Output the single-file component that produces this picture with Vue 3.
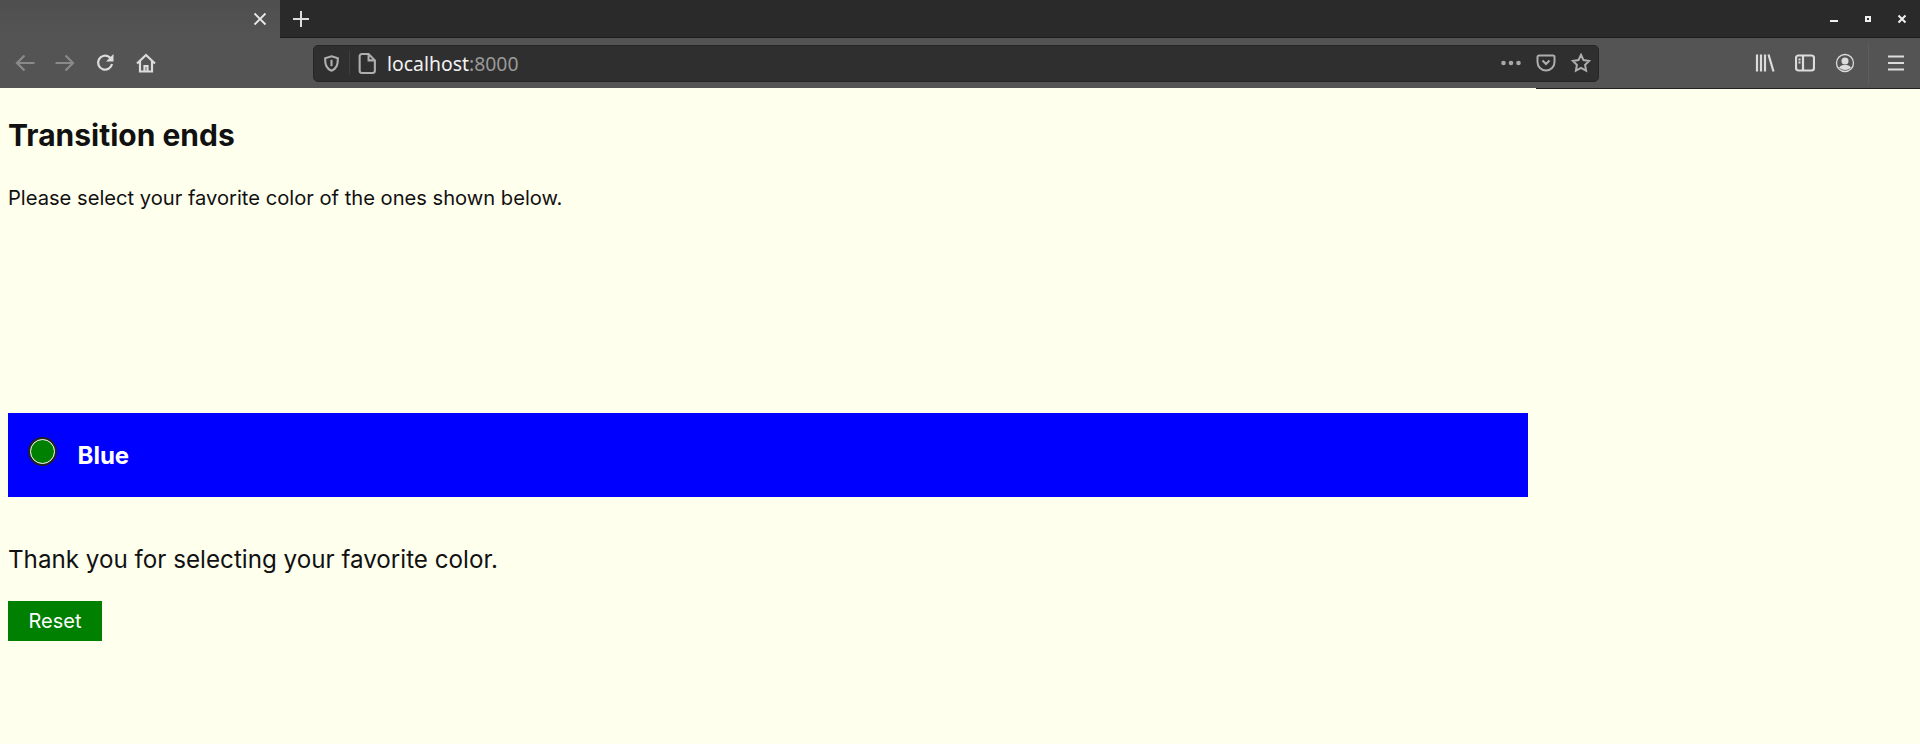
<script setup>
const pageTitle = 'Transition ends';
const colorName = 'Blue';
</script>

<template>
  <div class="window">
    <div class="tabbar">
      <div class="tab">
        <svg class="tab-close" viewBox="0 0 14 14"><path d="M1.5 1.5l11 11M12.5 1.5l-11 11" /></svg>
      </div>
      <svg class="new-tab" viewBox="0 0 16 16"><path d="M8 0v16M0 8h16" /></svg>
      <div class="win-controls">
        <span class="win-min"></span>
        <span class="win-max"></span>
        <svg class="win-close" viewBox="0 0 8 8"><path d="M0.500 0.500l7 7M7.500 0.500l-7 7" /></svg>
      </div>
    </div>

    <div class="toolbar">
      <div class="nav">
        <svg class="icon dim" viewBox="0 0 20 20"><path d="M19.500 10H2M9.500 2.500L2 10l7.500 7.500" /></svg>
        <svg class="icon dim" viewBox="0 0 20 20"><path d="M0.500 10H18M10.500 2.500L18 10l-7.500 7.500" /></svg>
        <svg class="icon" viewBox="0 0 20 20"><path d="M17 11a7 7 0 1 1-2.400-6.700L17 6.500" /><path class="solid" d="M18.500 1v7.500H11z" /></svg>
        <svg class="icon" viewBox="0 0 20 20"><path d="M1 10.500L10 2l9 8.500M4 8v10.500h12V8M8.500 18.500v-5.500h3v5.500" /></svg>
      </div>

      <div class="urlbar">
        <svg class="url-icon shield" viewBox="0 0 16 16"><path d="M8 1.200l6 1.800c0 6-1 9.800-6 11.800C3 12.800 2 9 2 3z" /><path d="M8 4.500v6" /></svg>
        <span class="url-sep"></span>
        <svg class="url-icon page-icon" viewBox="0 0 17 20"><path d="M3.500 1h6.500l6 6v10a2 2 0 0 1-2 2H3.500a2 2 0 0 1-2-2V3a2 2 0 0 1 2-2zM10 1v6h6" /></svg>
        <span class="url-text">localhost<span class="url-port">:8000</span></span>
        <svg class="url-dots" viewBox="0 0 20 6"><circle cx="2.500" cy="3" r="2.300" /><circle cx="10" cy="3" r="2.300" /><circle cx="17.500" cy="3" r="2.300" /></svg>
        <svg class="url-icon pocket" viewBox="0 0 20 18"><path d="M3 1.500h14a1.500 1.500 0 0 1 1.500 1.500v5a8.500 8.500 0 0 1-17 0V3A1.500 1.500 0 0 1 3 1.500zM6.500 6.500L10 10l3.500-3.500" /></svg>
        <svg class="url-icon star" viewBox="0 0 20 20"><path d="M10 1.800l2.500 5.300 5.700.8-4.100 4 1 5.800-5.100-2.800-5.100 2.800 1-5.800-4.100-4 5.700-.8z" /></svg>
      </div>

      <div class="tools">
        <svg class="icon" viewBox="0 0 20 20"><path d="M2 1.500v17M6 1.500v17M10 1.500v17M13.500 1.500l5 17" /></svg>
        <svg class="icon" viewBox="0 0 20 20"><rect x="1" y="2.500" width="18" height="15" rx="2.500" /><path d="M8 2.500v15M3.500 6.500h2M3.500 9.500h2" /></svg>
        <svg class="icon thin" viewBox="0 0 20 20"><circle cx="10" cy="10" r="8.500" /><circle class="solid" cx="10" cy="8" r="3.500" /><path class="solid" d="M4 14.500c1.500-2 3.500-2.500 6-2.500s4.500.5 6 2.500c-1.500 1.500-3.500 2.500-6 2.500s-4.500-1-6-2.500z" /></svg>
        <span class="tool-sep"></span>
        <svg class="icon" viewBox="0 0 20 20"><path d="M2 3.500h16M2 10h16M2 16.500h16" /></svg>
      </div>
    </div>

    <div class="content">
      <h1>{{ pageTitle }}</h1>
      <p class="intro">Please select your favorite color of the ones shown below.</p>

      <label class="choice">
        <input type="radio" name="color" checked />
        <span>{{ colorName }}</span>
      </label>

      <p class="thanks">Thank you for selecting your favorite color.</p>
      <button class="reset">Reset</button>
    </div>
  </div>
</template>

<style>
html,
body {
  margin: 0;
  background: #ffffee;
}
</style>

<style scoped>
.window {
  display: flex;
  flex-direction: column;
  height: 744px;
  overflow: hidden;
  font-family: Inter, "Liberation Sans", sans-serif;
}

.tabbar {
  display: flex;
  align-items: center;
  height: 38px;
  flex: none;
  background: #2a2a2a;
  border-bottom: 1px solid #1c1c1c;
  box-sizing: border-box;
}

.tab {
  width: 280px;
  height: 38px;
  display: flex;
  align-items: center;
  justify-content: flex-end;
  padding-right: 13px;
  box-sizing: border-box;
  background: linear-gradient(#4f4f4f, #545454);
}

.tab-close {
  width: 14px;
  height: 14px;
  fill: none;
  stroke: #e8e8e8;
  stroke-width: 1.8;
}

.new-tab {
  width: 16px;
  height: 16px;
  margin-left: 13px;
  fill: none;
  stroke: #dedede;
  stroke-width: 2;
}

.win-controls {
  margin-left: auto;
  display: flex;
  align-items: center;
  gap: 27px;
  padding-right: 14px;
}

.win-min {
  width: 8px;
  height: 2px;
  margin-top: 5px;
  background: #f0f0f0;
}

.win-max {
  width: 6px;
  height: 6px;
  box-sizing: border-box;
  border: 2px solid #f0f0f0;
}

.win-close {
  width: 8px;
  height: 8px;
  overflow: visible;
  fill: none;
  stroke: #f0f0f0;
  stroke-width: 2;
}

.toolbar {
  display: flex;
  align-items: center;
  height: 50px;
  flex: none;
  box-sizing: border-box;
  background: #545454;
  position: relative;
}

.toolbar::after {
  content: "";
  position: absolute;
  left: 1536px;
  right: 0;
  bottom: -1px;
  height: 1px;
  background: #222;
}

.icon {
  width: 20px;
  height: 20px;
  flex: none;
  fill: none;
  stroke: #dcdcdc;
  stroke-width: 2.2;
}

.icon.dim {
  stroke: #8a8a8a;
}

.icon.thin {
  stroke-width: 1.3;
}

.solid {
  fill: #dcdcdc;
  stroke: none;
}

.nav {
  display: flex;
  align-items: center;
  gap: 20.2px;
  width: 313px;
  padding-left: 15px;
  box-sizing: border-box;
  flex: none;
}

.urlbar {
  display: flex;
  align-items: center;
  width: 1286px;
  height: 37px;
  flex: none;
  box-sizing: border-box;
  padding: 0 7px 0 9px;
  background: #2f2f2f;
  border: 1px solid #262626;
  border-radius: 5px;
  font-family: "Noto Sans", sans-serif;
  font-size: 19.4px;
}

.url-icon {
  flex: none;
  fill: none;
  stroke: #aeaeae;
  stroke-width: 2;
}

.shield {
  width: 17px;
  height: 17px;
}

.url-sep {
  width: 1px;
  height: 24px;
  margin: 0 8px 0 9px;
  background: #3f3f3f;
}

.page-icon {
  width: 18px;
  height: 21px;
}

.url-text {
  margin-left: 11px;
  color: #f2f2f2;
}

.url-port {
  color: #9a9a9a;
}

.url-dots {
  margin-left: auto;
  width: 20px;
  height: 6px;
  flex: none;
  fill: #a8a8a8;
}

.pocket {
  width: 20px;
  height: 18px;
  margin-left: 15px;
}

.star {
  width: 20px;
  height: 20px;
  margin-left: 15px;
}

.tools {
  flex: 1;
  display: flex;
  align-items: center;
  gap: 20px;
  padding-left: 156px;
}

.tool-sep {
  width: 1px;
  height: 41px;
  margin: 0 -3px 0 -7px;
  background: #5e5e5e;
}

.content {
  flex: 1;
  padding: 0 8px;
  background: #ffffee;
  color: #111;
}

h1 {
  margin: 0;
  padding-top: 30px;
  font-size: 30px;
  line-height: 34px;
  font-weight: 700;
}

.intro {
  margin: 34px 0 0;
  font-size: 20.15px;
  line-height: 24px;
}

.choice {
  display: flex;
  align-items: center;
  gap: 22.5px;
  width: 1520px;
  height: 84px;
  margin-top: 203px;
  padding-left: 22px;
  box-sizing: border-box;
  background: #0000ff;
  color: #fff;
  font-size: 24px;
  font-weight: 700;
}

.choice input {
  appearance: none;
  width: 25px;
  height: 25px;
  margin: -7px 0 0;
  flex: none;
  box-sizing: border-box;
  border-radius: 50%;
  background: #008000;
  border: 1px solid #fff;
  box-shadow: 0 0 0 2px #222;
}

.thanks {
  margin: 48px 0 0;
  font-size: 24.2px;
  line-height: 29px;
}

.reset {
  display: block;
  width: 94px;
  height: 40px;
  margin-top: 27px;
  padding: 0;
  border: none;
  background: #008000;
  color: #fff;
  font-family: inherit;
  font-size: 20px;
}
</style>
